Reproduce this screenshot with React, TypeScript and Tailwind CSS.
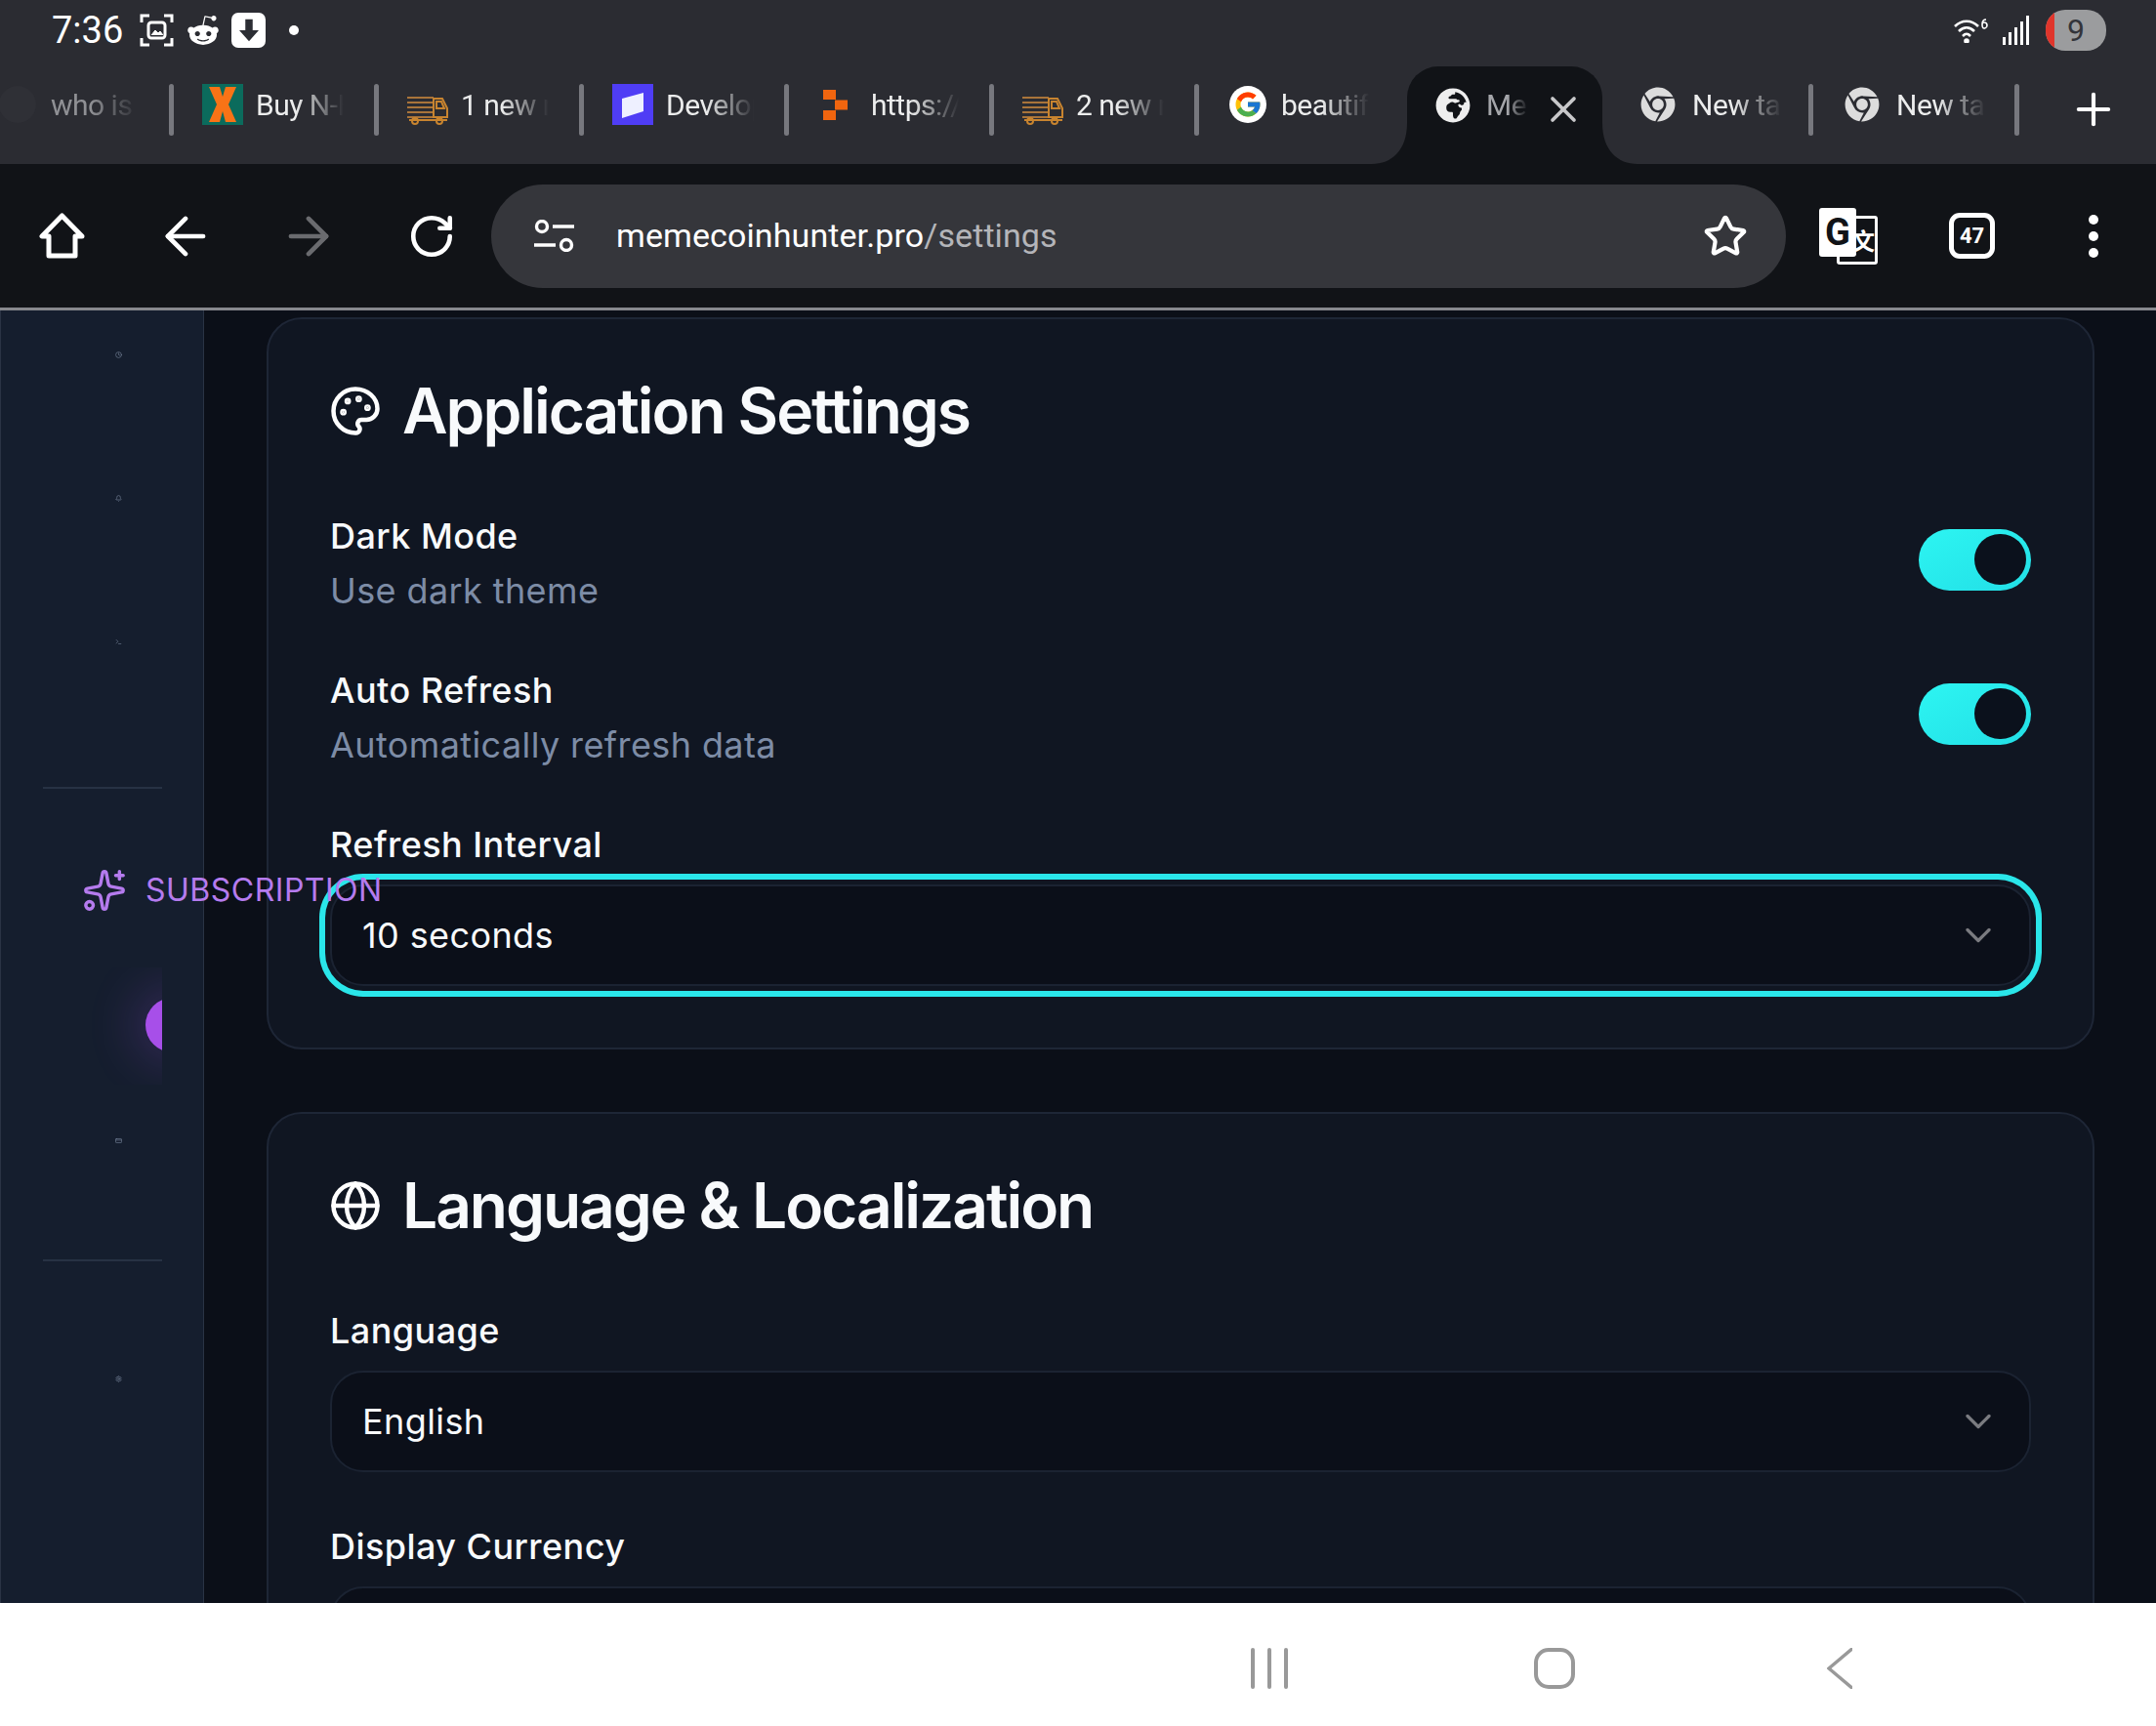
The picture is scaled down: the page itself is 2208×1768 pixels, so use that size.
import React from "react";
import {
  ArrowLeft,
  ArrowRight,
  Bell,
  ChevronDown,
  Clock,
  CreditCard,
  Globe,
  Palette,
  Plus,
  RotateCw,
  Settings,
  Sparkles,
  Star,
  Terminal,
  X,
} from "lucide-react";
import { FaChrome, FaGlobeAfrica, FaRedditAlien } from "react-icons/fa";
import { FcGoogle } from "react-icons/fc";

const Truck: React.FC = () => (
  <svg viewBox="0 0 42 30" className="mt-[12px] h-[30px] w-[42px]" fill="none" stroke="#c8842f" strokeWidth="2">
    <path d="M0 2h27M0 7h27M0 12h27M0 17h27M0 22h27" stroke="#a9743a" />
    <path d="M27 2v20h14v-9l-5-10H27z" />
    <path d="M30 6h5l3 7h-8z" />
    <path d="M2 25h39" />
    <circle cx="8" cy="26" r="3" />
    <circle cx="33" cy="26" r="3" />
  </svg>
);

const XLogo: React.FC = () => (
  <div className="flex h-[42px] w-[42px] items-center justify-center bg-[#0b6b5c]">
    <svg viewBox="0 0 42 42" className="h-[42px] w-[42px]">
      <path d="M7 3h11l3 10 3-10h11L27 21l8 18H24l-3-11-3 11H7l8-18z" fill="#f97316" />
    </svg>
  </div>
);

const DevLogo: React.FC = () => (
  <div className="flex h-[42px] w-[42px] items-center justify-center bg-[#4f3df5]">
    <svg viewBox="0 0 42 42" className="h-[42px] w-[42px]">
      <path d="M10 15l22-6v19l-22 7z" fill="#eef0ff" />
    </svg>
  </div>
);

const OrangeLogo: React.FC = () => (
  <svg viewBox="0 0 25 31" className="-ml-[6px] h-[31px] w-[25px]">
    <path d="M0 0h13v10H0zM12 10.500h13v10H12zM0 21h13v10H0z" fill="#f0650f" />
  </svg>
);

const GoogleLogo: React.FC = () => (
  <div className="flex h-[38px] w-[38px] items-center justify-center rounded-full bg-white">
    <FcGoogle size={30} />
  </div>
);

const tabs: { title: string; icon: React.ReactNode; dim?: boolean; noSep?: boolean }[] = [
  { title: "who is", icon: <div className="h-[38px] w-[38px] rounded-full bg-[#2f3036]" />, dim: true },
  { title: "Buy N-Hance", icon: <XLogo /> },
  { title: "1 new message", icon: <Truck /> },
  { title: "Developer", icon: <DevLogo /> },
  { title: "https://www", icon: <OrangeLogo /> },
  { title: "2 new message", icon: <Truck /> },
  { title: "beautiful", icon: <GoogleLogo />, noSep: true },
];

const Tab: React.FC<{ title: string; icon: React.ReactNode; dim?: boolean; noSep?: boolean }> = ({ title, icon, dim, noSep }) => (
  <div className="relative flex h-[100px] w-[210px] flex-none items-center pl-[32px] pb-[22px]">
    <div className="flex w-[42px] flex-none items-center justify-center">{icon}</div>
    <div
      className={`ml-[13px] w-[92px] overflow-hidden whitespace-nowrap font-['Roboto',sans-serif] text-[30px] tracking-[-0.5px] [mask-image:linear-gradient(to_right,black_45%,transparent_98%)] ${
        dim ? "text-[#8f9094]" : "text-[#eceded]"
      }`}
    >
      {title}
    </div>
    {!noSep && <div className="absolute right-[-3px] top-[18px] h-[53px] w-[5px] rounded-full bg-[#77787e]" />}
  </div>
);

const ToolButton: React.FC<{ children: React.ReactNode; className?: string }> = ({ children, className }) => (
  <div className={`flex flex-none items-center justify-center ${className ?? ""}`}>{children}</div>
);

const StatusBar: React.FC = () => (
  <div className="flex h-[68px] items-center justify-between pb-[6px] pl-[53px] pr-[51px] text-white">
    <div className="flex items-center">
      <span className="font-['Roboto',sans-serif] text-[38px] leading-none">7:36</span>
      <svg viewBox="0 0 35 34" className="ml-[17px] h-[34px] w-[35px]" fill="none" stroke="#fff" strokeWidth="3">
        <path d="M2 9V2h8M25 2h8v7M33 25v7h-8M10 32H2v-7" />
        <rect x="9" y="9" width="17" height="16" rx="3" />
        <path d="M12 22l4-5 3 3 2-2 3 4" fill="#fff" strokeWidth="1" />
      </svg>
      <FaRedditAlien className="ml-[13px]" size={34} />
      <div className="ml-[12px] flex h-[36px] w-[35px] items-center justify-center rounded-[7px] bg-white">
        <svg viewBox="0 0 24 24" className="h-[30px] w-[30px]" fill="#2b2d33">
          <path d="M9 3h6v9h5l-8 9-8-9h5z" />
        </svg>
      </div>
      <div className="ml-[24px] h-[10px] w-[10px] rounded-full bg-white" />
    </div>
    <div className="flex items-center">
      <svg viewBox="0 0 35 26" className="h-[26px] w-[35px]" fill="none" stroke="#fff" strokeWidth="2.6">
        <path d="M1 9c7-7 17-7 24 0M5 14c5-5 11-5 16 0M9 19c3-3 5-3 8 0" />
        <circle cx="13" cy="24" r="1.5" fill="#fff" />
        <path d="M33 2c-3 0-4 2-4 5s1 4 2 4 3-1 3-3-1-3-3-3-2 1-2 2" strokeWidth="1.6" />
      </svg>
      <svg viewBox="0 0 29 30" className="ml-[15px] h-[30px] w-[29px]" fill="#fff">
        <path d="M0 22h3v8H0zM6 17h3v13H6zM12 12h3v18h-3zM18 6h3v24h-3zM24 0h3v30h-3z" />
      </svg>
      <div className="relative ml-[15px] flex h-[42px] w-[62px] items-center justify-center overflow-hidden rounded-[20px] bg-[#9b9c9e]">
        <div className="absolute left-0 top-0 h-full w-[9px] bg-[#e0352b]" />
        <span className="font-['Roboto',sans-serif] text-[32px] leading-none text-[#33343a]">9</span>
      </div>
    </div>
  </div>
);

const TabStrip: React.FC = () => (
  <div className="ml-[-35px] flex h-[100px] items-start">
    {tabs.map((t) => (
      <Tab key={t.title} title={t.title} icon={t.icon} dim={t.dim} noSep={t.noSep} />
    ))}
    <div className="relative ml-[6px] flex h-[100px] w-[200px] flex-none items-start rounded-t-[32px] bg-[#111317] pl-[29px] pt-[22px]">
      <svg viewBox="0 0 36 42" className="absolute bottom-0 left-[-36px] h-[42px] w-[36px]">
        <path d="M36 0v42H0c20 0 36-14 36-42z" fill="#111317" />
      </svg>
      <svg viewBox="0 0 36 42" className="absolute bottom-0 right-[-36px] h-[42px] w-[36px]">
        <path d="M0 0v42h36C16 42 0 28 0 0z" fill="#111317" />
      </svg>
      <FaGlobeAfrica size={36} className="flex-none text-[#eeeeee]" />
      <div className="ml-[16px] w-[44px] flex-none overflow-hidden whitespace-nowrap font-['Roboto',sans-serif] text-[30px] leading-[36px] tracking-[-0.5px] text-[#a5a6aa] [mask-image:linear-gradient(to_right,black_50%,transparent_98%)]">
        MemeCoin
      </div>
      <X className="ml-[13px] flex-none text-[#c8c8ca]" size={44} strokeWidth={2} />
    </div>
    <div className="relative flex h-[100px] w-[216px] flex-none items-center pb-[22px] pl-[39px]">
      <FaChrome size={36} className="flex-none text-[#dcdcdc]" />
      <div className="ml-[17px] w-[94px] overflow-hidden whitespace-nowrap font-['Roboto',sans-serif] text-[30px] tracking-[-0.5px] text-[#eceded] [mask-image:linear-gradient(to_right,black_45%,transparent_98%)]">
        New tab
      </div>
      <div className="absolute right-0 top-[18px] h-[53px] w-[5px] rounded-full bg-[#77787e]" />
    </div>
    <div className="relative flex h-[100px] w-[211px] flex-none items-center pb-[22px] pl-[32px]">
      <FaChrome size={36} className="flex-none text-[#dcdcdc]" />
      <div className="ml-[17px] w-[94px] overflow-hidden whitespace-nowrap font-['Roboto',sans-serif] text-[30px] tracking-[-0.5px] text-[#eceded] [mask-image:linear-gradient(to_right,black_45%,transparent_98%)]">
        New tab
      </div>
      <div className="absolute right-0 top-[18px] h-[53px] w-[5px] rounded-full bg-[#77787e]" />
    </div>
    <div className="flex h-[78px] flex-1 items-center justify-center pl-[12px] pt-[10px]">
      <Plus size={52} strokeWidth={1.9} className="text-white" />
    </div>
  </div>
);

const Toolbar: React.FC = () => (
  <div className="flex h-[147px] items-center bg-[#111317] text-white">
    <ToolButton className="ml-[40px] w-[47px]">
      <svg viewBox="0 0 47 47" className="h-[47px] w-[47px]" fill="none" stroke="#fff" strokeWidth="5" strokeLinejoin="round">
        <path d="M23.5 3L3 24h7v20h27V24h7z" />
      </svg>
    </ToolButton>
    <ToolButton className="ml-[78px] w-[50px]">
      <ArrowLeft size={62} strokeWidth={1.8} className="flex-none" />
    </ToolButton>
    <ToolButton className="ml-[76px] w-[50px]">
      <ArrowRight size={62} strokeWidth={1.8} className="flex-none text-[#6a6b6f]" />
    </ToolButton>
    <ToolButton className="ml-[76px] w-[50px]">
      <RotateCw size={52} strokeWidth={2.2} />
    </ToolButton>
    <div className="ml-[36px] flex h-[106px] w-[1326px] flex-none items-center rounded-full bg-[#35363b] pl-[44px]">
      <svg viewBox="0 0 41 33" className="h-[33px] w-[41px] flex-none" fill="none" stroke="#fff" strokeWidth="3.4">
        <circle cx="8" cy="7" r="5.5" />
        <path d="M19 7h22M0 26h22" />
        <circle cx="33" cy="26" r="5.5" />
      </svg>
      <div className="ml-[43px] font-['Roboto',sans-serif] text-[34px] tracking-[0.1px] text-white">
        memecoinhunter.pro<span className="text-[#b4b5b9]">/settings</span>
      </div>
      <Star size={46} strokeWidth={2.2} className="ml-auto mr-[39px]" />
    </div>
    <ToolButton className="ml-[34px] w-[60px]">
      <div className="relative h-[58px] w-[60px]">
        <div className="absolute bottom-0 right-0 flex h-[50px] w-[42px] items-center justify-center rounded-[3px] border-[3px] border-white pl-[12px] font-['Noto_Sans_CJK_SC',sans-serif] text-[24px] font-bold leading-none">
          文
        </div>
        <div className="absolute left-0 top-0 flex h-[50px] w-[38px] items-center justify-center rounded-[3px] bg-white font-['Roboto',sans-serif] text-[38px] font-bold leading-none text-[#111317]">
          G
        </div>
      </div>
    </ToolButton>
    <ToolButton className="ml-[73px] w-[47px]">
      <div className="flex h-[47px] w-[47px] items-center justify-center rounded-[11px] border-[5px] border-white font-['Roboto',sans-serif] text-[22px] font-bold leading-none">
        47
      </div>
    </ToolButton>
    <ToolButton className="ml-[78px] w-[46px]">
      <div className="flex flex-col gap-[7px]">
        <div className="h-[10px] w-[10px] rounded-full bg-white" />
        <div className="h-[10px] w-[10px] rounded-full bg-white" />
        <div className="h-[10px] w-[10px] rounded-full bg-white" />
      </div>
    </ToolButton>
  </div>
);

const Sidebar: React.FC = () => (
  <aside className="h-full w-[209px] flex-none border-x border-[#2a3344] bg-[#151e2e] pl-[43px]">
    <div className="flex w-[122px] flex-col">
      <Clock size={7} strokeWidth={2} className="ml-[74px] mt-[42px] text-[#7c8aa0]" />
      <Bell size={7} strokeWidth={2} className="ml-[74px] mt-[140px] text-[#7c8aa0]" />
      <Terminal size={7} strokeWidth={2} className="ml-[74px] mt-[140px] text-[#7c8aa0]" />
      <div className="mt-[145px] h-[2px] bg-[#273244]" />
      <div className="relative z-10 ml-[40px] mt-[81px] flex h-[46px] items-center whitespace-nowrap">
        <Sparkles size={46} strokeWidth={1.8} className="flex-none text-[#b57bee]" />
        <span className="ml-[19px] font-['Inter',sans-serif] text-[32px] tracking-[0.5px] text-[#b57bee]">
          SUBSCRIPTION
        </span>
      </div>
      <div className="relative mt-[56px] h-[120px] overflow-hidden">
        <div className="absolute left-[105px] top-[31px] h-[56px] w-[56px] rounded-full bg-[#a74fe9] shadow-[0_0_50px_12px_rgba(168,85,247,0.2)]" />
      </div>
      <CreditCard size={7} strokeWidth={2} className="ml-[74px] mt-[54px] text-[#7c8aa0]" />
      <div className="mt-[118px] h-[2px] bg-[#273244]" />
      <Settings size={7} strokeWidth={2} className="ml-[74px] mt-[117px] text-[#7c8aa0]" />
    </div>
  </aside>
);

const Toggle: React.FC = () => (
  <div className="mb-[8px] flex h-[63px] w-[115px] flex-none items-center justify-end rounded-full bg-gradient-to-br from-[#2df5f2] to-[#22dfe6] pr-[5px]">
    <div className="h-[52px] w-[53px] rounded-full bg-[#0b111c]" />
  </div>
);

const labelClass = "text-[36px] font-[450] leading-[48px] tracking-[0.45px] text-[#f8fafc]";

const SwitchRow: React.FC<{ title: string; desc: string }> = ({ title, desc }) => (
  <div className="flex items-center justify-between">
    <div>
      <div className={labelClass}>{title}</div>
      <div className="mt-[8px] text-[36px] leading-[48px] tracking-[0.4px] text-[#7d8ca6]">{desc}</div>
    </div>
    <Toggle />
  </div>
);

const SelectBox: React.FC<{ value: string; focused?: boolean }> = ({ value, focused }) => (
  <div
    className={`mt-[17px] flex h-[104px] items-center justify-between rounded-[34px] border-2 border-[#1b2332] bg-[#0b0f19] pl-[31px] pr-[30px] text-[#f8fafc] ${
      focused ? "ring-[6px] ring-[#2ae6ea] ring-offset-[5px] ring-offset-[#101622]" : ""
    }`}
  >
    <span className="text-[36px] tracking-[0.4px]">{value}</span>
    <ChevronDown size={44} strokeWidth={1.8} className="text-[#7a7b80]" />
  </div>
);

const Card: React.FC<{ title: string; icon: React.ReactNode; children: React.ReactNode }> = ({ title, icon, children }) => (
  <section className="rounded-[36px] border-2 border-[#1e2636] bg-[#101622] pb-[63px] pl-[63px] pr-[63px] pt-[63px]">
    <div className="flex h-[62px] items-center">
      {icon}
      <h2 className="ml-[21px] text-[64px] font-semibold tracking-[-2.05px] text-[#f8fafc]">{title}</h2>
    </div>
    <div className="mt-[73px]">{children}</div>
  </section>
);

const App: React.FC = () => {
  return (
    <div className="flex h-[1768px] w-[2208px] flex-col overflow-hidden bg-white font-['Inter',sans-serif]">
      <div className="bg-[#2b2c32]">
        <StatusBar />
        <TabStrip />
      </div>
      <Toolbar />
      <div className="h-[3px] flex-none bg-[#87888d]" />
      <div className="flex h-[1324px] flex-none overflow-hidden bg-[#0b0f18]">
        <Sidebar />
        <main className="flex-1 pl-[64px] pr-[63px] pt-[7px]">
          <Card title="Application Settings" icon={<Palette size={54} strokeWidth={2} className="-ml-[1px] flex-none text-white" />}>
            <SwitchRow title="Dark Mode" desc="Use dark theme" />
            <div className="mt-[54px]">
              <SwitchRow title="Auto Refresh" desc="Automatically refresh data" />
            </div>
            <div className={`mt-[54px] ${labelClass}`}>Refresh Interval</div>
            <SelectBox value="10 seconds" focused />
          </Card>
          <div className="mt-[64px]">
            <Card title="Language & Localization" icon={<Globe size={54} strokeWidth={2} className="-ml-[1px] flex-none text-white" />}>
              <div className={labelClass}>Language</div>
              <SelectBox value="English" />
              <div className={`mt-[52px] ${labelClass}`}>Display Currency</div>
              <SelectBox value="USD ($)" />
            </Card>
          </div>
        </main>
      </div>
      <div className="flex flex-1 items-start bg-white pl-[1281px] pt-[46px]">
        <div className="flex h-[42px] w-[38px] flex-none justify-between">
          <div className="h-full w-[4px] rounded-full bg-[#999999]" />
          <div className="h-full w-[4px] rounded-full bg-[#999999]" />
          <div className="h-full w-[4px] rounded-full bg-[#999999]" />
        </div>
        <div className="ml-[252px] h-[42px] w-[42px] flex-none rounded-[15px] border-[4px] border-[#999999]" />
        <svg viewBox="0 0 26 42" className="ml-[258px] h-[42px] w-[26px] flex-none" fill="none" stroke="#999999" strokeWidth="3.4" strokeLinecap="round">
          <path d="M25 1.5L2 21l23 19.5" />
        </svg>
      </div>
    </div>
  );
};

export default App;
